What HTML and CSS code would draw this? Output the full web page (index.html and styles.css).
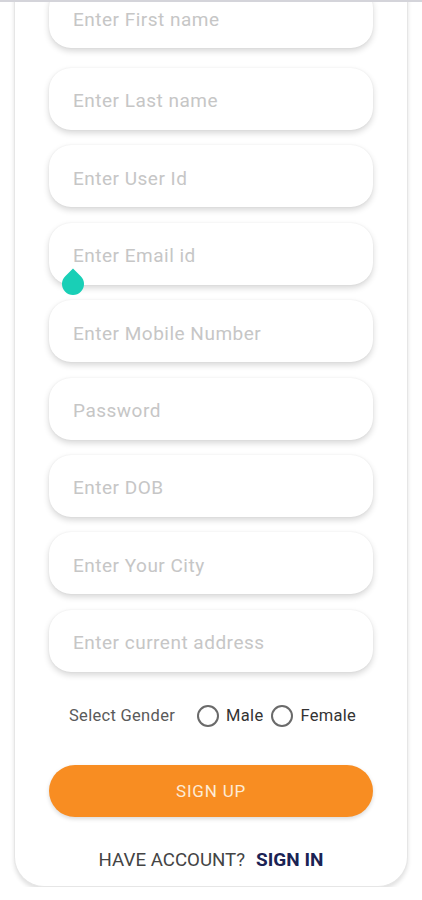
FILE: index.html
```html
<!DOCTYPE html>
<html lang="en">
<head>
    <meta charset="UTF-8">
    <title>Sign Up</title>
    <link rel="stylesheet" href="styles.css">
</head>
<body>
    <div class="topline"></div>
    <div class="card">
        <form id="signupForm" class="fields">
            <input type="text" class="field first" placeholder="Enter First name">
            <input type="text" class="field" placeholder="Enter Last name">
            <input type="text" class="field" placeholder="Enter User Id">
            <div class="field-wrap">
                <input type="email" class="field" placeholder="Enter Email id">
                <span class="handle"></span>
            </div>
            <input type="tel" class="field" placeholder="Enter Mobile Number">
            <input type="password" class="field" placeholder="Password">
            <input type="text" class="field" placeholder="Enter DOB">
            <input type="text" class="field" placeholder="Enter Your City">
            <input type="text" class="field" placeholder="Enter current address">
        </form>

        <div class="gender">
            <span class="gender-label">Select Gender</span>
            <label class="radio"><span class="dot"></span>Male</label>
            <label class="radio"><span class="dot"></span>Female</label>
        </div>

        <button type="submit" form="signupForm" class="btn-signup">SIGN UP</button>

        <div class="signin">
            <span>HAVE ACCOUNT?</span>
            <a href="#" class="signin-link">SIGN IN</a>
        </div>
    </div>
</body>
</html>
```

FILE: styles.css
```css
body {
    font-family: Roboto, 'Noto Sans', sans-serif;
    background-color: white;
    margin: 0;
    overflow: hidden;
}

.topline {
    position: fixed;
    top: 0;
    left: 0;
    right: 0;
    height: 2px;
    background: #d4d4da;
    z-index: 5;
}

.card {
    margin: -14px 14px 0;
    padding: 0 34px 16px 34px;
    border: 1px solid #e6e6e6;
    border-top: none;
    border-radius: 0 0 30px 30px;
    box-shadow: 0 3px 4px rgba(0, 0, 0, 0.12);
    background: white;
}

.fields {
    display: flex;
    flex-direction: column;
    gap: 15.4px;
}

.field-wrap {
    position: relative;
}

.field {
    display: block;
    box-sizing: border-box;
    width: 100%;
    height: 62px;
    padding: 4px 24px 0;
    border: none;
    border-radius: 22px;
    background: white;
    box-shadow: 0 3px 6px rgba(0, 0, 0, 0.16), 0 0 2px rgba(0, 0, 0, 0.06);
    font-family: Roboto, sans-serif;
    font-size: 19px;
    letter-spacing: 0.5px;
    color: #333;
    outline: none;
}

.field::placeholder {
    color: #c6c6c6;
}

.field.first {
    margin-bottom: 4.6px;
}

.handle {
    position: absolute;
    left: 13px;
    top: 50px;
    width: 22px;
    height: 22px;
    background: #19cfb6;
    border-radius: 0 50% 50% 50%;
    transform: rotate(45deg);
}

.gender {
    display: flex;
    align-items: center;
    height: 30px;
    margin-top: 29px;
    padding-left: 20px;
    font-size: 16.5px;
    letter-spacing: 0.3px;
}

.gender-label {
    color: #5a5a5a;
    margin-right: 22px;
}

.radio {
    display: flex;
    align-items: center;
    color: #333;
    margin-right: 8px;
}

.dot {
    box-sizing: border-box;
    width: 22px;
    height: 22px;
    border: 2px solid #6a6a6a;
    border-radius: 50%;
    margin-right: 7px;
}

.btn-signup {
    display: block;
    width: 100%;
    height: 52px;
    margin-top: 34px;
    border: none;
    border-radius: 26px;
    background: #f88d22;
    color: #fdebd6;
    font-family: Roboto, sans-serif;
    font-size: 17px;
    letter-spacing: 0.8px;
    box-shadow: 0 2px 4px rgba(0, 0, 0, 0.15);
    cursor: pointer;
}

.signin {
    display: flex;
    justify-content: center;
    align-items: center;
    gap: 11px;
    height: 20px;
    margin-top: 33px;
    font-size: 18.7px;
    color: #444;
}

.signin-link {
    color: #1b2354;
    font-weight: bold;
    font-size: 19px;
    text-decoration: none;
}
```
